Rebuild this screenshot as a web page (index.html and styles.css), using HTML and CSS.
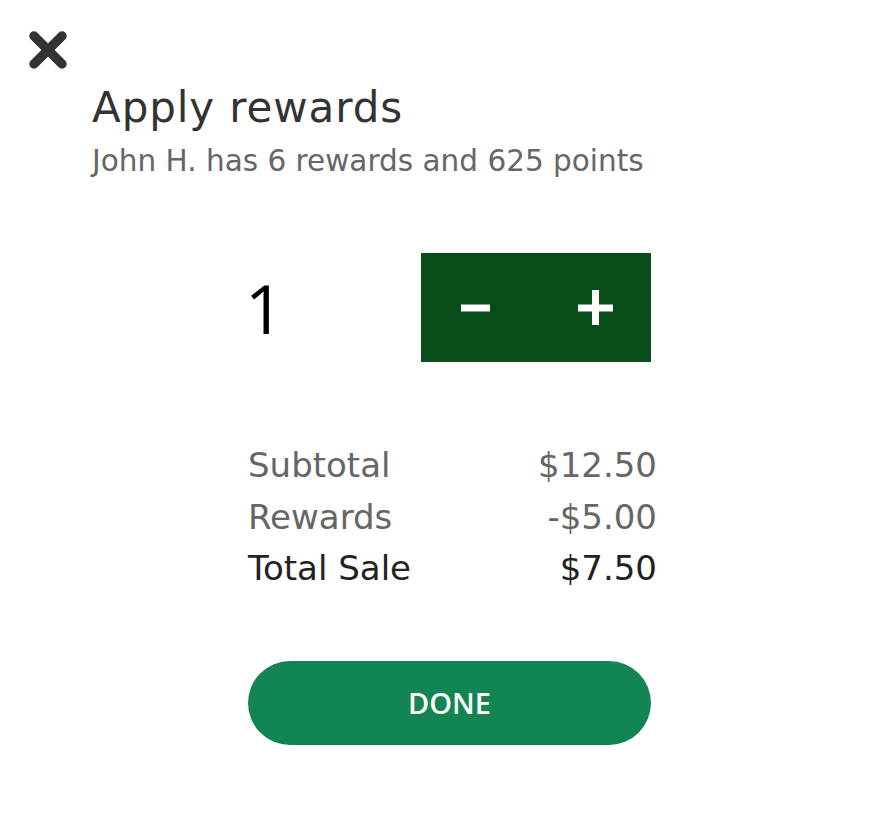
FILE: index.html
```html
<!DOCTYPE html>
<html lang="en">
<head>
<meta charset="utf-8">
<title>Apply rewards</title>
<link rel="stylesheet" href="styles.css">
</head>
<body>
<div class="page">
  <button class="close" aria-label="Close">
    <svg width="38" height="38" viewBox="0 0 38 38"><path d="M5 5 L33 33 M33 5 L5 33" stroke="#333" stroke-width="9.5" stroke-linecap="round"/></svg>
  </button>
  <header class="header">
    <h1 class="title">Apply rewards</h1>
    <p class="subtitle">John H. has 6 rewards and 625 points</p>
  </header>
  <main class="panel">
    <div class="stepper">
      <div class="count">1</div>
      <div class="controls">
        <button class="ctrl ctrl-minus" aria-label="Decrease">
          <svg width="30" height="8" viewBox="0 0 30 8"><rect x="0" y="0.5" width="29" height="7" fill="#fff"/></svg>
        </button>
        <button class="ctrl ctrl-plus" aria-label="Increase">
          <svg width="36" height="36" viewBox="0 0 36 36"><rect x="0" y="14.5" width="35" height="7" fill="#fff"/><rect x="14" y="0" width="7" height="35" fill="#fff"/></svg>
        </button>
      </div>
    </div>
    <div class="summary">
      <div class="row muted"><span>Subtotal</span><span>$12.50</span></div>
      <div class="row muted"><span>Rewards</span><span>-$5.00</span></div>
      <div class="row total"><span>Total Sale</span><span>$7.50</span></div>
    </div>
    <button class="done">DONE</button>
  </main>
</div>
</body>
</html>
```

FILE: styles.css
```css
* { box-sizing: border-box; }
body {
  margin: 0;
  background: #fff;
  font-family: "DejaVu Sans", "Open Sans", sans-serif;
}
.page {
  display: flex;
  flex-direction: column;
  padding: 31px 0 0 29px;
}
.close {
  width: 38px;
  height: 38px;
  padding: 0;
  border: 0;
  background: none;
  display: flex;
}
.header {
  margin: 14px 0 0 63px;
}
.title {
  margin: 0;
  font-size: 42px;
  line-height: 50px;
  font-weight: 400;
  color: #333;
  letter-spacing: 0.9px;
}
.subtitle {
  margin: 10px 0 0;
  font-size: 29.5px;
  line-height: 36px;
  color: #666;
}
.panel {
  margin: 74px 0 0 219px;
  width: 409px;
  display: flex;
  flex-direction: column;
}
.stepper {
  display: flex;
  align-items: center;
}
.count {
  width: 173px;
  padding-left: 0;
  font-family: "Open Sans", sans-serif;
  font-weight: 500;
  font-size: 68px;
  line-height: 1;
  color: #000;
  text-indent: -3px;
}
.controls {
  width: 230px;
  height: 109px;
  background: #084c19;
  display: flex;
}
.ctrl {
  flex: 1;
  border: 0;
  background: none;
  padding: 0;
  display: flex;
  align-items: center;
  justify-content: center;
}
.ctrl-minus { padding-right: 4px; }
.ctrl-plus { padding-left: 6px; }
.summary {
  margin-top: 78px;
  display: flex;
  flex-direction: column;
}
.row {
  display: flex;
  justify-content: space-between;
  font-size: 34px;
  line-height: 51.5px;
}
.muted { color: #666; }
.total { color: #222; }
.done {
  margin-top: 66px;
  width: 403px;
  height: 84px;
  border: 0;
  border-radius: 42px;
  background: #138552;
  color: #fff;
  font-family: "Open Sans", sans-serif;
  font-weight: 600;
  font-size: 29px;
}
```
